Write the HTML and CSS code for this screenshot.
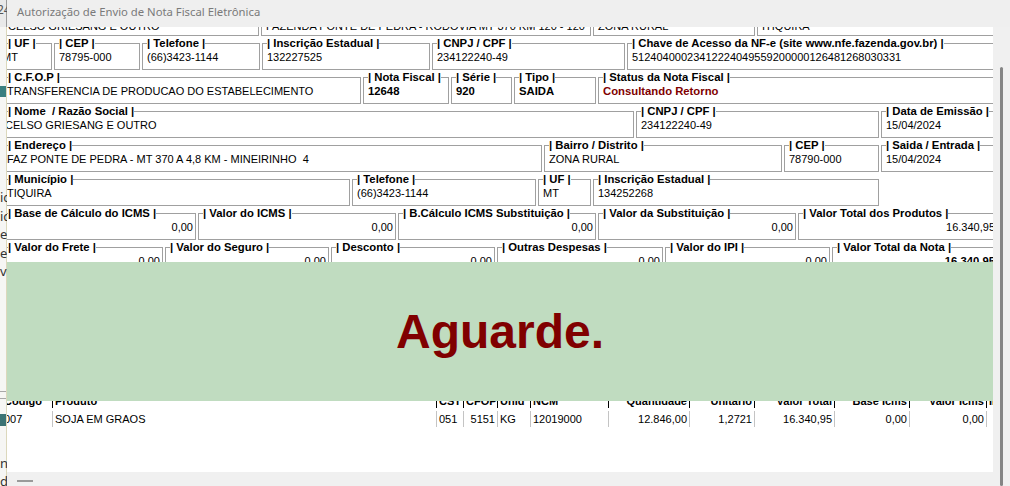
FILE: index.html
```html
<!DOCTYPE html>
<html lang="pt-BR">
<head>
<meta charset="utf-8">
<title>Autorização de Envio de Nota Fiscal Eletrônica</title>
<link rel="stylesheet" href="styles.css">
</head>
<body>
<div class="screen">
  <aside class="behind">
    <div class="b-top">24</div>
    <div class="b-body">
      <div class="b-sp59"></div>
      <div class="b-teal"></div>
      <div class="b-sp91"></div>
      <div class="b-words">
        <div>ic</div><div>id</div><div>er</div><div>er</div><div>vo</div>
      </div>
      <div class="b-sp110"></div>
      <div class="b-line"></div>
      <div class="b-sp6"></div>
      <div class="b-line"></div>
      <div class="b-sp15"></div>
      <div class="b-teal2"></div>
      <div class="b-sp28"></div>
      <div class="b-words2"><div>ne</div><div>d</div></div>
    </div>
  </aside>

  <div class="win">
    <header class="titlebar">Autorização de Envio de Nota Fiscal Eletrônica</header>
    <div class="client">
      <div class="content">
        <div class="scroll">
          <div class="form">
            <div class="row">
              <div class="box w256"><span class="lbl">| Nome / Razão Social |</span><span class="val low">CELSO GRIESANG E OUTRO</span></div>
              <div class="box w330"><span class="lbl">| Endereço |</span><span class="val low">FAZENDA PONTE DE PEDRA - RODOVIA MT 370 KM 120 - 120</span></div>
              <div class="box w162"><span class="lbl">| Bairro / Distrito |</span><span class="val low">ZONA RURAL</span></div>
              <div class="box w241"><span class="lbl">| Município |</span><span class="val low">ITIQUIRA</span></div>
            </div>
            <div class="row">
              <div class="box w49"><span class="lbl">| UF |</span><span class="val sh6">MT</span></div>
              <div class="box w86"><span class="lbl">| CEP |</span><span class="val">78795-000</span></div>
              <div class="box w118"><span class="lbl">| Telefone |</span><span class="val">(66)3423-1144</span></div>
              <div class="box w168"><span class="lbl">| Inscrição Estadual |</span><span class="val">132227525</span></div>
              <div class="box w193"><span class="lbl">| CNPJ / CPF |</span><span class="val">234122240-49</span></div>
              <div class="box w371"><span class="lbl">| Chave de Acesso da NF-e (site www.nfe.fazenda.gov.br) |</span><span class="val">51240400023412224049559200000126481268030331</span></div>
            </div>
            <div class="row">
              <div class="box w358"><span class="lbl">| C.F.O.P |</span><span class="val sh1">TRANSFERENCIA DE PRODUCAO DO ESTABELECIMENTO</span></div>
              <div class="box w86"><span class="lbl">| Nota Fiscal |</span><span class="val b">12648</span></div>
              <div class="box w61"><span class="lbl">| Série |</span><span class="val b">920</span></div>
              <div class="box w82"><span class="lbl">| Tipo |</span><span class="val b">SAIDA</span></div>
              <div class="box w400"><span class="lbl">| Status da Nota Fiscal |</span><span class="val b red">Consultando Retorno</span></div>
            </div>
            <div class="row">
              <div class="box w631"><span class="lbl">| Nome&nbsp; / Razão Social |</span><span class="val sh3">CELSO GRIESANG E OUTRO</span></div>
              <div class="box w243"><span class="lbl">| CNPJ / CPF |</span><span class="val">234122240-49</span></div>
              <div class="box w117"><span class="lbl">| Data de Emissão |</span><span class="val">15/04/2024</span></div>
            </div>
            <div class="row">
              <div class="box w539"><span class="lbl">| Endereço |</span><span class="val sh1">FAZ PONTE DE PEDRA - MT 370 A 4,8 KM - MINEIRINHO&nbsp; 4</span></div>
              <div class="box w238"><span class="lbl">| Bairro / Distrito |</span><span class="val">ZONA RURAL</span></div>
              <div class="box w95"><span class="lbl">| CEP |</span><span class="val">78790-000</span></div>
              <div class="box w117"><span class="lbl">| Saida / Entrada |</span><span class="val">15/04/2024</span></div>
            </div>
            <div class="row">
              <div class="box w347"><span class="lbl">| Município |</span><span class="val sh4">ITIQUIRA</span></div>
              <div class="box w184"><span class="lbl">| Telefone |</span><span class="val">(66)3423-1144</span></div>
              <div class="box w53"><span class="lbl">| UF |</span><span class="val">MT</span></div>
              <div class="box w286"><span class="lbl">| Inscrição Estadual |</span><span class="val">134252268</span></div>
            </div>
            <div class="row">
              <div class="box w193"><span class="lbl">| Base de Cálculo do ICMS |</span><span class="val r">0,00</span></div>
              <div class="box w198"><span class="lbl">| Valor do ICMS |</span><span class="val r">0,00</span></div>
              <div class="box w198"><span class="lbl">| B.Cálculo ICMS Substituição |</span><span class="val r">0,00</span></div>
              <div class="box w198"><span class="lbl">| Valor da Substituição |</span><span class="val r">0,00</span></div>
              <div class="box w200"><span class="lbl">| Valor Total dos Produtos |</span><span class="val r">16.340,95</span></div>
            </div>
            <div class="row">
              <div class="box w160"><span class="lbl">| Valor do Frete |</span><span class="val r">0,00</span></div>
              <div class="box w164"><span class="lbl">| Valor do Seguro |</span><span class="val r">0,00</span></div>
              <div class="box w164"><span class="lbl">| Desconto |</span><span class="val r">0,00</span></div>
              <div class="box w166"><span class="lbl">| Outras Despesas |</span><span class="val r">0,00</span></div>
              <div class="box w165"><span class="lbl">| Valor do IPI |</span><span class="val r">0,00</span></div>
              <div class="box w166"><span class="lbl">| Valor Total da Nota |</span><span class="val r b">16.340,95</span></div>
            </div>

            <div class="tbl">
              <div class="th c0">Código</div>
              <div class="th">Produto</div>
              <div class="th">CST</div>
              <div class="th">CFOP</div>
              <div class="th">Unid</div>
              <div class="th">NCM</div>
              <div class="th r">Quantidade</div>
              <div class="th r">Unitário</div>
              <div class="th r">Valor Total</div>
              <div class="th r">Base Icms</div>
              <div class="th r">Valor Icms</div>
              <div class="th">IPI</div>

              <div class="td c0">007</div>
              <div class="td">SOJA EM GRAOS</div>
              <div class="td">051</div>
              <div class="td r">5151</div>
              <div class="td">KG</div>
              <div class="td">12019000</div>
              <div class="td r">12.846,00</div>
              <div class="td r">1,2721</div>
              <div class="td r">16.340,95</div>
              <div class="td r">0,00</div>
              <div class="td r">0,00</div>
              <div class="td"></div>
            </div>
          </div>
        </div>
        <div class="hbar"><span class="hthumb"></span></div>
        <div class="overlay">Aguarde.</div>
      </div>
      <div class="vbar"><span class="vthumb"></span></div>
    </div>
  </div>
</div>
</body>
</html>
```

FILE: styles.css
```css
* { box-sizing: border-box; }

body {
  margin: 0;
  width: 1010px;
  height: 486px;
  overflow: hidden;
  font-family: "Liberation Sans", Arial, sans-serif;
  color: #000;
}

.screen {
  display: flex;
  width: 1010px;
  height: 486px;
}

/* ---------- window behind (left sliver) ---------- */
.behind {
  width: 7px;
  flex: none;
  display: flex;
  flex-direction: column;
  overflow: hidden;
  font-family: "Noto Sans", sans-serif;
}
.b-top {
  height: 27px;
  flex: none;
  background: #e9e9e9;
  border-right: 1px solid #9a9a9a;
  font-size: 12px;
  line-height: 20px;
  color: #555;
  text-indent: -3px;
  white-space: nowrap;
}
.b-body {
  flex: 1;
  background: #f6f6f4;
  border-right: 1px solid #dcd8bc;
  display: flex;
  flex-direction: column;
}
.b-sp59 { height: 59px; flex: none; }
.b-sp91 { height: 91px; flex: none; }
.b-sp110 { height: 110px; flex: none; }
.b-sp6 { height: 6px; flex: none; }
.b-sp15 { height: 15px; flex: none; }
.b-sp28 { height: 28px; flex: none; }
.b-teal { height: 11px; flex: none; background: #3a7f80; }
.b-teal2 { height: 12px; flex: none; background: #3b7374; }
.b-line { height: 1px; flex: none; background: #a8a8a8; }
.b-words, .b-words2 {
  flex: none;
  font-size: 13px;
  line-height: 18.5px;
  color: #333;
  white-space: nowrap;
}

/* ---------- main window ---------- */
.win {
  flex: 1;
  min-width: 0;
  display: flex;
  flex-direction: column;
}
.titlebar {
  height: 27px;
  flex: none;
  background: #efefef;
  color: #7a7a7a;
  font-family: "Noto Sans", sans-serif;
  font-size: 11.3px;
  line-height: 24px;
  padding-left: 10px;
  white-space: nowrap;
}
.client {
  flex: 1;
  min-height: 0;
  display: flex;
}
.content {
  width: 986px;
  flex: none;
  position: relative;
  display: flex;
  flex-direction: column;
  overflow: hidden;
  background: #fff;
}
.scroll {
  flex: 1;
  min-height: 0;
  overflow: hidden;
}
.form {
  margin: -24px 0 0 -4px;
  width: 995px;
}

/* ---------- group boxes ---------- */
.row {
  display: flex;
  gap: 2px;
  height: 34px;
}
.box {
  flex: none;
  height: 27px;
  margin-top: 6px;
  border: 1px solid #a0a0a0;
  padding: 0 2px 0 4px;
  display: flex;
  flex-direction: column;
  align-items: flex-start;
  font-size: 11px;
  line-height: 13px;
}
.lbl {
  margin-top: -7px;
  background: #fff;
  font-weight: bold;
  font-size: 11.3px;
  white-space: nowrap;
}
.val {
  margin-top: 1px;
  align-self: stretch;
  white-space: nowrap;
}
.val.r { text-align: right; }
.val.b { font-weight: bold; font-size: 11.3px; }
.val.red { color: #800000; }
.val.low { margin-top: 4px; }
.sh1 { margin-left: -1px; }
.sh3 { margin-left: -3px; }
.sh4 { margin-left: -4px; }
.sh6 { margin-left: -6px; }

.w49 { width: 49px; }
.w53 { width: 53px; }
.w61 { width: 61px; }
.w82 { width: 82px; }
.w86 { width: 86px; }
.w95 { width: 95px; }
.w117 { width: 117px; }
.w118 { width: 118px; }
.w160 { width: 160px; }
.w162 { width: 162px; }
.w164 { width: 164px; }
.w165 { width: 165px; }
.w166 { width: 166px; }
.w168 { width: 168px; }
.w184 { width: 184px; }
.w193 { width: 193px; }
.w198 { width: 198px; }
.w200 { width: 200px; }
.w238 { width: 238px; }
.w241 { width: 241px; }
.w243 { width: 243px; }
.w256 { width: 256px; }
.w286 { width: 286px; }
.w330 { width: 330px; }
.w347 { width: 347px; }
.w358 { width: 358px; }
.w371 { width: 371px; }
.w400 { width: 400px; }
.w539 { width: 539px; }
.w631 { width: 631px; }

/* ---------- items grid ---------- */
.tbl {
  display: grid;
  grid-template-columns: 49px 384px 27px 34px 33px 78px 81px 65px 80px 75px 77px 60px;
  grid-template-rows: 14px 16px;
  row-gap: 3px;
  margin-top: 119px;
  font-size: 11px;
}
.th, .td {
  padding: 0 2px;
  white-space: nowrap;
  overflow: hidden;
}
.th {
  font-weight: bold;
  line-height: 14px;
  border-left: 1px solid #000;
}
.td {
  line-height: 16px;
  border-left: 1px solid #c4c4c4;
}
.th.c0, .td.c0 { border-left: none; padding-left: 1px; }
.th.r, .td.r { text-align: right; }

/* ---------- scrollbars ---------- */
.hbar {
  height: 14px;
  flex: none;
  background: #f0f0f0;
  padding: 8px 0 0 10px;
}
.hthumb {
  display: block;
  width: 16px;
  height: 2px;
  background: #9a9a9a;
}
.vbar {
  width: 17px;
  flex: none;
  background: #f0f0f0;
  display: flex;
  flex-direction: column;
  padding: 40px 0 0 7px;
}
.vthumb {
  flex: 1;
  width: 3px;
  background: #858585;
  border-radius: 1.5px;
}

/* ---------- wait overlay ---------- */
.overlay {
  position: absolute;
  left: 0;
  right: 0;
  top: 235px;
  height: 139px;
  background: #c0dcc0;
  display: flex;
  align-items: center;
  justify-content: center;
  color: #800000;
  font-weight: bold;
  font-size: 48px;
}
```
